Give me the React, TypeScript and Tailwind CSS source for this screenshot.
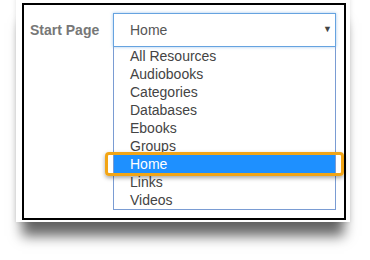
const options = [
  'All Resources',
  'Audiobooks',
  'Categories',
  'Databases',
  'Ebooks',
  'Groups',
  'Home',
  'Links',
  'Videos',
]

export default function App() {
  const selected = 'Home'

  return (
    <div className="w-[370px] h-[260px] bg-white overflow-hidden font-['Liberation_Sans',Arial,sans-serif]">
      {/* white card with drop shadow */}
      <div className="ml-[16px] mt-[-3px] w-[334px] pt-[6px] pb-[2px] pl-[6px] pr-[4px] bg-white shadow-[0_20px_12px_-6px_rgba(0,0,0,0.6),0_0_5px_rgba(0,0,0,0.12)]">
        <div className="h-[217px] border-2 border-black bg-white pt-[8px] pl-[6px] pr-[8px]">
          <div className="flex">
            <div className="w-[83px] h-[34px] flex items-center text-[14px] font-bold text-[#777]">
              Start Page
            </div>
            <div className="w-[223px]">
              {/* select */}
              <div className="h-[34px] border border-[#66a3e0] shadow-[0_0_3px_rgba(102,163,224,0.6)] flex items-center justify-between pl-[16px] pr-[3px] text-[14px] text-[#555]">
                <span>{selected}</span>
                <span className="text-[9px] text-[#444]">▼</span>
              </div>
              {/* dropdown list */}
              <div className="relative border border-t-0 border-[#7a9cd3]">
                {options.map(o => (
                  <div
                    key={o}
                    className={`h-[18px] leading-[18px] pl-[16px] text-[14px] ${
                      o === selected ? 'bg-[#1e90ff] text-white' : 'text-[#444]'
                    }`}
                  >
                    {o}
                  </div>
                ))}
                <div className="absolute left-[-9px] top-[105px] w-[239px] h-[24px] border-[3px] border-[#f2a516] rounded-[4px] shadow-[0_2px_4px_rgba(0,0,0,0.35)]" />
              </div>
            </div>
          </div>
        </div>
      </div>
    </div>
  )
}
